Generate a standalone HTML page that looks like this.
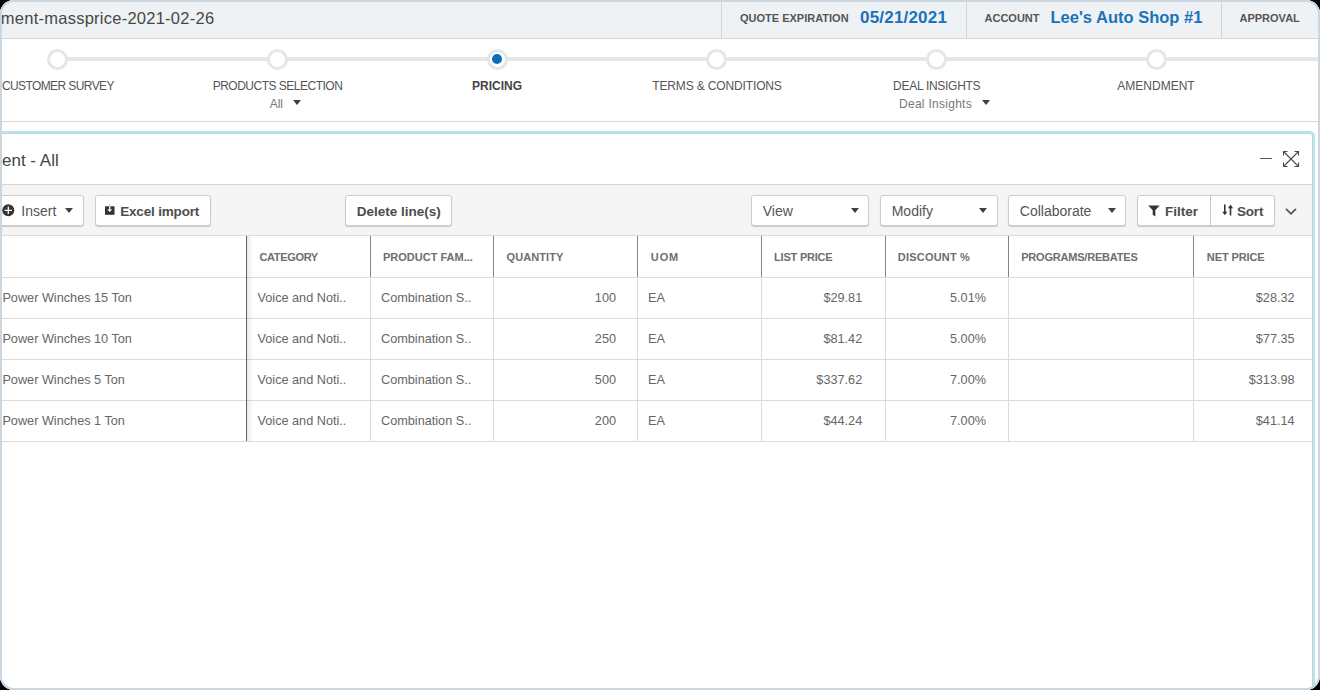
<!DOCTYPE html>
<html><head><meta charset="utf-8">
<style>
*{box-sizing:border-box;margin:0;padding:0}
html,body{width:1320px;height:690px;overflow:hidden;background:#000}
body{font-family:"Liberation Sans",sans-serif;position:relative}
#wrap{position:absolute;left:0;top:0;width:1320px;height:690px;border-radius:14px;overflow:hidden;background:#fff}
#frame{position:absolute;left:0;top:0;width:1320px;height:690px;border:2px solid #cad6e0;border-radius:14px;pointer-events:none;z-index:50}
.a{position:absolute}
.t{position:absolute;white-space:nowrap;line-height:1}
#hdr{position:absolute;left:0;top:0;width:1320px;height:39px;background:#eef2f5;border-bottom:1px solid #d6d6d6}
.sep{position:absolute;top:0;width:1px;height:38px;background:#d2d4d6}
.hl{font-size:11px;font-weight:700;color:#555}
.hv{font-weight:700;color:#1b72ba}
.line{position:absolute;left:57px;top:57px;width:1263px;height:4px;background:#e4e7e9}
.dot{position:absolute;top:48.8px;width:21px;height:21px;border-radius:50%;border:3px solid #e4e7e9;background:#fff}
.sl{font-size:12px;color:#555;text-align:center;width:200px}
.sub{font-size:12px;color:#777}
.caret{position:absolute;width:0;height:0;border-left:4px solid transparent;border-right:4px solid transparent;border-top:5px solid #404040}
#panel{position:absolute;left:-20px;top:133px;width:1333px;height:600px;border:1px solid #cfcfcf;border-radius:3px;box-shadow:0 0 0 2px #b1e6f9;background:#fff}
.btn{position:absolute;top:195px;height:31px;background:#fff;border:1px solid #cdcdcd;border-radius:3px;box-shadow:0 1px 1px rgba(0,0,0,.18)}
.bt{font-size:13.5px;font-weight:700;color:#4d4d4d}
.dd{font-size:14px;color:#555}
.hc{font-size:11px;font-weight:700;color:#6e6e6e}
.bc{font-size:12.7px;color:#666}
.hrow{position:absolute;left:0;height:1px;background:#dcdcdc}
.vcol{position:absolute;width:1px}
</style></head><body>
<div id="wrap">
 <!-- header -->
 <div id="hdr"></div>
 <div class="t" style="left:0.8px;top:10px;font-size:16.5px;color:#474747;letter-spacing:0.25px">ment-massprice-2021-02-26</div>
 <div class="sep" style="left:721px"></div>
 <div class="t hl" style="left:740px;top:13.2px">QUOTE EXPIRATION</div>
 <div class="t hv" style="left:860px;top:9.3px;font-size:17px;letter-spacing:0.2px">05/21/2021</div>
 <div class="sep" style="left:966px"></div>
 <div class="t hl" style="left:984.5px;top:13.2px">ACCOUNT</div>
 <div class="t hv" style="left:1050.5px;top:9.2px;font-size:16.5px">Lee's Auto Shop #1</div>
 <div class="sep" style="left:1221px"></div>
 <div class="t hl" style="left:1239.5px;top:13.2px">APPROVAL</div>

 <!-- stepper -->
 <div class="line"></div>
 <div class="dot" style="left:47px"></div>
 <div class="dot" style="left:266.6px"></div>
 <div class="dot" style="left:486.5px"><div class="a" style="left:2.4px;top:2.2px;width:10.2px;height:10.2px;border-radius:50%;background:#0b6fbc"></div></div>
 <div class="dot" style="left:706px"></div>
 <div class="dot" style="left:925.6px"></div>
 <div class="dot" style="left:1146px"></div>
 <div class="t sl" style="left:-42.1px;top:79.8px;letter-spacing:-0.6px">CUSTOMER SURVEY</div>
 <div class="t sl" style="left:177.5px;top:79.8px;letter-spacing:-0.5px">PRODUCTS SELECTION</div>
 <div class="t sl" style="left:397px;top:79.8px;font-weight:700;color:#444">PRICING</div>
 <div class="t sl" style="left:617px;top:79.8px;letter-spacing:-0.14px">TERMS &amp; CONDITIONS</div>
 <div class="t sl" style="left:836.7px;top:79.8px;letter-spacing:-0.28px">DEAL INSIGHTS</div>
 <div class="t sl" style="left:1056px;top:79.8px">AMENDMENT</div>
 <div class="t sub" style="left:269.7px;top:98.2px">All</div>
 <div class="caret" style="left:292.5px;top:100.4px"></div>
 <div class="t sub" style="left:899px;top:98.2px;letter-spacing:0.28px">Deal Insights</div>
 <div class="caret" style="left:981.8px;top:100.4px"></div>
 <div class="a" style="left:0;top:121px;width:1320px;height:1px;background:#d9d9d9"></div>

 <!-- panel -->
 <div id="panel"></div>
 <div class="t" style="left:2px;top:151.6px;font-size:17px;color:#444">ent - All</div>
 <div class="a" style="left:1260px;top:157.6px;width:11.6px;height:1.8px;background:#5a5a5a"></div>
 <svg class="a" style="left:1283px;top:151px" width="17" height="16" viewBox="0 0 17 16">
  <g stroke="#4a4a4a" stroke-width="1.1" fill="none">
   <line x1="1" y1="1" x2="15" y2="15"/><line x1="15" y1="1" x2="1" y2="15"/>
   <polyline points="0.5,4.5 0.5,0.5 4.5,0.5"/><polyline points="11.5,0.5 15.5,0.5 15.5,4.5"/>
   <polyline points="0.5,11.5 0.5,15.5 4.5,15.5"/><polyline points="11.5,15.5 15.5,15.5 15.5,11.5"/>
  </g>
 </svg>
 <div class="a" style="left:0;top:184px;width:1312px;height:1px;background:#d4d4d4"></div>
 <div class="a" style="left:0;top:185px;width:1312px;height:50px;background:#f5f5f5"></div>
 <div class="a" style="left:0;top:235px;width:1312px;height:1px;background:#dcdcdc"></div>

 <!-- toolbar buttons -->
 <div class="btn" style="left:-20px;width:104px"></div>
 <svg class="a" style="left:2px;top:204px" width="13" height="13" viewBox="0 0 13 13"><circle cx="6.3" cy="6.3" r="6" fill="#333"/><path d="M6.3 2.6v7.4M2.6 6.3h7.4" stroke="#fff" stroke-width="1.3"/></svg>
 <div class="t dd" style="left:21.3px;top:204px">Insert</div>
 <div class="caret" style="left:65.2px;top:208.3px"></div>
 <div class="btn" style="left:95px;width:116px"></div>
 <svg class="a" style="left:105px;top:203px" width="10" height="12" viewBox="0 0 10 12"><rect x="0" y="3.3" width="9.5" height="8.5" fill="#333"/><path d="M4.75 1v6.5" stroke="#9ec3dc" stroke-width="1"/><path d="M4.75 3.3v4.5" stroke="#fff" stroke-width="1.1"/><path d="M2.9 6.3l1.85 2 1.85-2" stroke="#fff" stroke-width="1.1" fill="none"/></svg>
 <div class="t bt" style="left:120.2px;top:204.6px;letter-spacing:-0.17px">Excel import</div>
 <div class="btn" style="left:345px;width:107px"></div>
 <div class="t bt" style="left:356.8px;top:204.6px">Delete line(s)</div>
 <div class="btn" style="left:751px;width:118px"></div>
 <div class="t dd" style="left:762.7px;top:204px">View</div>
 <div class="caret" style="left:850.9px;top:208.3px"></div>
 <div class="btn" style="left:880px;width:118px"></div>
 <div class="t dd" style="left:891.7px;top:204px">Modify</div>
 <div class="caret" style="left:979.2px;top:208.3px"></div>
 <div class="btn" style="left:1008px;width:118px"></div>
 <div class="t dd" style="left:1019.8px;top:204px">Collaborate</div>
 <div class="caret" style="left:1108.3px;top:208.3px"></div>
 <div class="btn" style="left:1137px;width:138px"></div>
 <div class="a" style="left:1209.5px;top:196px;width:1.5px;height:29px;background:#c6c6c6"></div>
 <svg class="a" style="left:1148px;top:205px" width="12" height="12" viewBox="0 0 12 12"><path d="M0.2 0.4h11.4l-4.3 4.8v6.4l-2.6-1.8v-4.6z" fill="#333"/></svg>
 <div class="t bt" style="left:1165px;top:204.6px">Filter</div>
 <svg class="a" style="left:1222px;top:204px" width="12" height="12" viewBox="0 0 12 12"><path d="M2.8 0.5v8" stroke="#333" stroke-width="1.6"/><path d="M0.3 7.8h5l-2.5 3.5z" fill="#333"/><path d="M8.5 11.5v-8" stroke="#333" stroke-width="1.6"/><path d="M6 4.2h5l-2.5-3.6z" fill="#333"/></svg>
 <div class="t bt" style="left:1237px;top:204.6px;letter-spacing:-0.2px">Sort</div>
 <svg class="a" style="left:1285px;top:207px" width="12" height="9" viewBox="0 0 12 9"><path d="M1 1.8l5 5 5-5" stroke="#555" stroke-width="1.8" fill="none"/></svg>

 <!-- table -->
 <div id="tbl">
<div class="vcol" style="left:370px;top:236px;height:41px;background:#858585"></div>
<div class="vcol" style="left:493px;top:236px;height:41px;background:#858585"></div>
<div class="vcol" style="left:637px;top:236px;height:41px;background:#858585"></div>
<div class="vcol" style="left:761px;top:236px;height:41px;background:#858585"></div>
<div class="vcol" style="left:885px;top:236px;height:41px;background:#858585"></div>
<div class="vcol" style="left:1008px;top:236px;height:41px;background:#858585"></div>
<div class="vcol" style="left:1193px;top:236px;height:41px;background:#858585"></div>
<div class="vcol" style="left:370px;top:277px;height:164px;background:#dcdcdc"></div>
<div class="vcol" style="left:493px;top:277px;height:164px;background:#dcdcdc"></div>
<div class="vcol" style="left:637px;top:277px;height:164px;background:#dcdcdc"></div>
<div class="vcol" style="left:761px;top:277px;height:164px;background:#dcdcdc"></div>
<div class="vcol" style="left:885px;top:277px;height:164px;background:#dcdcdc"></div>
<div class="vcol" style="left:1008px;top:277px;height:164px;background:#dcdcdc"></div>
<div class="vcol" style="left:1193px;top:277px;height:164px;background:#dcdcdc"></div>
<div class="hrow" style="top:277px;width:1312px"></div>
<div class="hrow" style="top:318px;width:1312px"></div>
<div class="hrow" style="top:359px;width:1312px"></div>
<div class="hrow" style="top:400px;width:1312px"></div>
<div class="hrow" style="top:441px;width:1312px"></div>
<div class="a" style="left:247px;top:236px;width:6px;height:205px;background:linear-gradient(90deg,rgba(0,0,0,.09),rgba(0,0,0,0))"></div>
<div class="vcol" style="left:246px;top:236px;height:205px;background:#656565"></div>
<div class="t hc" style="left:259.5px;top:251.7px;letter-spacing:-0.35px">CATEGORY</div>
<div class="t hc" style="left:383px;top:251.7px;letter-spacing:0px">PRODUCT FAM...</div>
<div class="t hc" style="left:506.5px;top:251.7px;letter-spacing:0.1px">QUANTITY</div>
<div class="t hc" style="left:650.8px;top:251.7px;letter-spacing:0.9px">UOM</div>
<div class="t hc" style="left:774px;top:251.7px;letter-spacing:-0.2px">LIST PRICE</div>
<div class="t hc" style="left:897.8px;top:251.7px;letter-spacing:0.2px">DISCOUNT %</div>
<div class="t hc" style="left:1021.2px;top:251.7px;letter-spacing:-0.2px">PROGRAMS/REBATES</div>
<div class="t hc" style="left:1206.8px;top:251.7px;letter-spacing:-0.1px">NET PRICE</div>
<div class="t bc" style="left:2.4px;top:292px">Power Winches 15 Ton</div>
<div class="t bc" style="left:257.5px;top:292px">Voice and Noti..</div>
<div class="t bc" style="left:381px;top:292px">Combination S..</div>
<div class="t bc" style="right:704px;top:292px">100</div>
<div class="t bc" style="left:648px;top:292px">EA</div>
<div class="t bc" style="right:457.79999999999995px;top:292px">$29.81</div>
<div class="t bc" style="right:334px;top:292px">5.01%</div>
<div class="t bc" style="right:25.40000000000009px;top:292px">$28.32</div>
<div class="t bc" style="left:2.4px;top:333px">Power Winches 10 Ton</div>
<div class="t bc" style="left:257.5px;top:333px">Voice and Noti..</div>
<div class="t bc" style="left:381px;top:333px">Combination S..</div>
<div class="t bc" style="right:704px;top:333px">250</div>
<div class="t bc" style="left:648px;top:333px">EA</div>
<div class="t bc" style="right:457.79999999999995px;top:333px">$81.42</div>
<div class="t bc" style="right:334px;top:333px">5.00%</div>
<div class="t bc" style="right:25.40000000000009px;top:333px">$77.35</div>
<div class="t bc" style="left:2.4px;top:374px">Power Winches 5 Ton</div>
<div class="t bc" style="left:257.5px;top:374px">Voice and Noti..</div>
<div class="t bc" style="left:381px;top:374px">Combination S..</div>
<div class="t bc" style="right:704px;top:374px">500</div>
<div class="t bc" style="left:648px;top:374px">EA</div>
<div class="t bc" style="right:457.79999999999995px;top:374px">$337.62</div>
<div class="t bc" style="right:334px;top:374px">7.00%</div>
<div class="t bc" style="right:25.40000000000009px;top:374px">$313.98</div>
<div class="t bc" style="left:2.4px;top:415px">Power Winches 1 Ton</div>
<div class="t bc" style="left:257.5px;top:415px">Voice and Noti..</div>
<div class="t bc" style="left:381px;top:415px">Combination S..</div>
<div class="t bc" style="right:704px;top:415px">200</div>
<div class="t bc" style="left:648px;top:415px">EA</div>
<div class="t bc" style="right:457.79999999999995px;top:415px">$44.24</div>
<div class="t bc" style="right:334px;top:415px">7.00%</div>
<div class="t bc" style="right:25.40000000000009px;top:415px">$41.14</div>
</div><!--/tbl-->
</div>
<div id="frame"></div>
</body></html>
